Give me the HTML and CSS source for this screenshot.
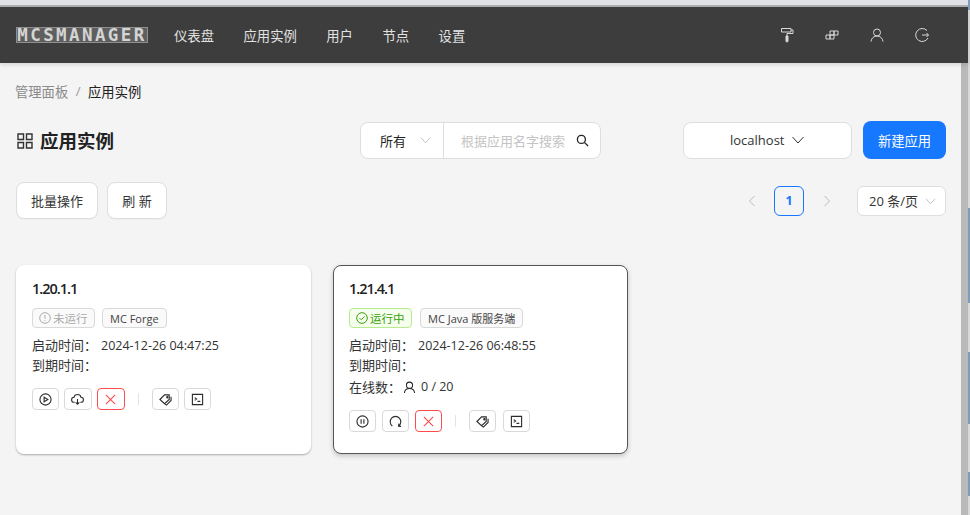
FILE: index.html
```html
<!DOCTYPE html>
<html lang="zh-CN">
<head>
    <meta charset="UTF-8">
    <title>应用实例 - MCSManager</title>
    <link rel="stylesheet" href="styles.css">
</head>
<body>
    <div class="window">
        <div class="browser-edge"></div>
        <div class="header">
            <div class="logo">MCSMANAGER</div>
            <div class="nav-item">仪表盘</div>
            <div class="nav-item">应用实例</div>
            <div class="nav-item">用户</div>
            <div class="nav-item">节点</div>
            <div class="nav-item">设置</div>
            <div class="header-tools">
                <svg class="tool" viewBox="0 0 16 16"><path d="M2.500 1.500h9.500v3.500H2.500zM12 3h2v3.500H8V9"/><path class="solid" d="M7 9h2v5a1 1 0 0 1-2 0z"/></svg>
                <svg class="tool" viewBox="0 0 16 16"><path d="M2 8h4v4H2zM6 8h4v4H6zM6 4h4v4H6zM10 4h4v4h-4z"/></svg>
                <svg class="tool" viewBox="0 0 16 16"><circle cx="8" cy="5.500" r="3.500"/><path d="M2 14.500c.4-3.500 3-5.500 6-5.500s5.600 2 6 5.500"/></svg>
                <svg class="tool" viewBox="0 0 16 16"><path d="M13 3.600A6.500 6.500 0 1 0 14 11M8 8h6.500M12.500 6l2 2-2 2"/></svg>
            </div>
        </div>

        <div class="below">
            <div class="content">
                <div class="breadcrumb">
                    <span class="crumb-link">管理面板</span>
                    <span class="crumb-sep">/</span>
                    <span>应用实例</span>
                </div>

                <div class="title-row">
                    <svg class="title-icon" viewBox="0 0 16 16"><path d="M1 1h5.500v5.500H1zM9.500 1H15v5.500H9.500zM1 9.500h5.500V15H1zM9.500 9.500H15V15H9.500z"/></svg>
                    <h1 class="title">应用实例</h1>
                    <div class="search-group">
                        <div class="search-type">所有
                            <svg class="chevron light" viewBox="0 0 12 8"><path d="M1 1.500l5 5.500 5-5.500"/></svg>
                        </div>
                        <div class="search-input">根据应用名字搜索
                            <svg class="search-icon" viewBox="0 0 14 14"><circle cx="5.800" cy="5.800" r="4.300"/><path d="M9 9l4 4"/></svg>
                        </div>
                    </div>
                    <div class="node-select">localhost
                        <svg class="chevron dark" viewBox="0 0 12 8"><path d="M.5 1l5.500 6 5.500-6"/></svg>
                    </div>
                    <div class="btn-primary">新建应用</div>
                </div>

                <div class="tool-row">
                    <div class="btn">批量操作</div>
                    <div class="btn btn-refresh">刷 新</div>
                    <div class="pager">
                        <svg class="pager-arrow" viewBox="0 0 8 12"><path d="M6.500 1L1.500 6l5 5"/></svg>
                        <div class="page-current">1</div>
                        <svg class="pager-arrow" viewBox="0 0 8 12"><path d="M1.500 1l5 5-5 5"/></svg>
                        <div class="page-size">20 条/页
                            <svg class="chevron light" viewBox="0 0 12 8"><path d="M1 1.500l5 5.500 5-5.500"/></svg>
                        </div>
                    </div>
                </div>

                <div class="cards">
                    <div class="card">
                        <div class="card-title">1.20.1.1</div>
                        <div class="tags">
                            <span class="tag tag-off">
                                <svg class="tag-icon" viewBox="0 0 12 12"><circle cx="6" cy="6" r="5.300"/><path d="M6 3v3.800M6 8.200v1"/></svg>未运行
                            </span>
                            <span class="tag">MC Forge</span>
                        </div>
                        <div class="info"><span class="info-label">启动时间：</span>2024-12-26 04:47:25</div>
                        <div class="info"><span class="info-label">到期时间：</span></div>
                        <div class="actions">
                            <div class="act">
                                <svg viewBox="0 0 14 14"><circle cx="7" cy="7" r="6"/><path d="M5.500 4.500L9.500 7l-4 2.500z"/></svg>
                            </div>
                            <div class="act act-wide">
                                <svg viewBox="0 0 14 14"><path d="M4 10H3.500a2.700 2.700 0 0 1-.3-5.400 3.900 3.900 0 0 1 7.600 0A2.700 2.700 0 0 1 10.500 10H10M7 6.500V12M5 10l2 2 2-2"/></svg>
                            </div>
                            <div class="act act-wide act-danger">
                                <svg viewBox="0 0 14 14"><path d="M2 2l10 10M12 2L2 12"/></svg>
                            </div>
                            <div class="act-sep"></div>
                            <div class="act">
                                <svg viewBox="0 0 14 14"><path d="M1 7l5-5h5v5l-5 4.500zM13 4v4l-5 5-1.500-1"/><circle cx="9" cy="4.500" r=".7"/></svg>
                            </div>
                            <div class="act">
                                <svg viewBox="0 0 14 14"><path d="M1.500 1.500h11v11h-11zM4 5l2 1.500L4 8M7 9h3"/></svg>
                            </div>
                        </div>
                    </div>

                    <div class="card card-active">
                        <div class="card-title">1.21.4.1</div>
                        <div class="tags">
                            <span class="tag tag-on">
                                <svg class="tag-icon" viewBox="0 0 12 12"><circle cx="6" cy="6" r="5.300"/><path d="M3.500 6l1.800 1.800 3.200-3.300"/></svg>运行中
                            </span>
                            <span class="tag">MC Java 版服务端</span>
                        </div>
                        <div class="info"><span class="info-label">启动时间：</span>2024-12-26 06:48:55</div>
                        <div class="info"><span class="info-label">到期时间：</span></div>
                        <div class="info info-online"><span class="info-label-short">在线数：</span><svg class="online-icon" viewBox="0 0 14 14"><circle cx="7" cy="4.500" r="3.300"/><path d="M1.500 13c.3-3 2.500-5 5.500-5s5.200 2 5.500 5"/></svg><span>0 / 20</span></div>
                        <div class="actions">
                            <div class="act">
                                <svg viewBox="0 0 14 14"><circle cx="7" cy="7" r="6"/><path d="M5.500 4.500v5M8.500 4.500v5"/></svg>
                            </div>
                            <div class="act">
                                <svg viewBox="0 0 14 14"><path d="M3.600 11.800A5.700 5.700 0 1 1 10.400 11.800M10.700 9.300l-.4 2.700 2.700.2"/></svg>
                            </div>
                            <div class="act act-danger">
                                <svg viewBox="0 0 14 14"><path d="M2 2l10 10M12 2L2 12"/></svg>
                            </div>
                            <div class="act-sep"></div>
                            <div class="act act-wide">
                                <svg viewBox="0 0 14 14"><path d="M1 7l5-5h5v5l-5 4.500zM13 4v4l-5 5-1.500-1"/><circle cx="9" cy="4.500" r=".7"/></svg>
                            </div>
                            <div class="act act-wide">
                                <svg viewBox="0 0 14 14"><path d="M1.500 1.500h11v11h-11zM4 5l2 1.500L4 8M7 9h3"/></svg>
                            </div>
                        </div>
                    </div>
                </div>
            </div>
            <div class="scroll-gutter"></div>
        </div>
    </div>
</body>
</html>
```

FILE: styles.css
```css
* {
    box-sizing: border-box;
}

html, body {
    margin: 0;
    height: 100%;
    overflow: hidden;
}

body {
    font-family: "Open Sans", "Noto Sans CJK SC", sans-serif;
    font-size: 13px;
    color: #333;
    /* bits of the desktop behind the window, seen at the right edge */
    background: linear-gradient(to bottom,
        #7f9cbb 0 10px, #d9d9d9 10px 208px, #7f9cbb 208px 303px,
        #d9d9d9 303px 352px, #7f9cbb 352px 424px, #d9d9d9 424px 472px,
        #7f9cbb 472px 496px, #d9d9d9 496px);
}

svg {
    display: block;
    fill: none;
    stroke: currentColor;
}

.window {
    display: flex;
    flex-direction: column;
    width: 968px;
    height: 515px;
}

.browser-edge {
    height: 7px;
    background-color: #dfe0e5;
    border-bottom: 2px solid #aeaeb0;
}

/* Top bar */
.header {
    display: flex;
    align-items: center;
    height: 56px;
    padding-left: 16px;
    background-color: #3d3d3d;
    box-shadow: 0 2px 4px rgba(0, 0, 0, 0.12);
    position: relative;
    z-index: 1;
}

.logo {
    display: flex;
    align-items: center;
    justify-content: center;
    width: 132px;
    height: 16px;
    margin: 0 26px 1px 0;
    border: 1px solid #8f8f8f;
    background-color: #5f5f5f;
    color: #d4d4d4;
    font-family: "DejaVu Sans Mono", monospace;
    font-size: 17.500px;
    font-weight: bold;
    letter-spacing: 2.400px;
    white-space: nowrap;
}

.nav-item {
    margin-right: 29.500px;
    color: #e2e2e2;
    font-size: 13.330px;
}

.header-tools {
    display: flex;
    gap: 29px;
    margin-left: auto;
    margin-right: 38px;
}

.tool {
    width: 16px;
    height: 16px;
    color: #d8d8d8;
    stroke-width: 1;
}

.tool .solid {
    fill: currentColor;
}

/* Page body */
.below {
    display: flex;
    flex: 1;
    min-height: 0;
}

.content {
    flex: 1;
    padding: 19px 15px 0 16px;
    background-color: #f4f4f4;
}

.scroll-gutter {
    width: 7px;
    background-color: #b9b9b9;
}

.breadcrumb {
    display: flex;
    align-items: center;
    height: 18px;
    margin-left: -1px;
    color: #222;
    font-size: 13.300px;
}

.crumb-link {
    color: #8a8a8a;
}

.crumb-sep {
    margin: 0 7.500px;
    color: #999;
}

.title-row {
    display: flex;
    align-items: center;
    height: 38px;
    margin-top: 21px;
}

.title-icon {
    width: 16px;
    height: 16px;
    margin: 2px 7px 0 1px;
    color: #333;
    stroke-width: 1.400;
}

.title {
    width: 320px;
    margin: 0;
    color: #222;
    font-size: 18.500px;
    font-weight: bold;
}

.search-group {
    display: flex;
    flex: none;
    width: 241px;
    height: 37px;
    border: 1px solid #dedede;
    border-radius: 8px;
    background-color: #fff;
}

.search-type {
    display: flex;
    flex: none;
    align-items: center;
    justify-content: space-between;
    width: 83px;
    padding: 0 12px 0 19px;
    border-right: 1px solid #dedede;
    color: #222;
}

.search-input {
    display: flex;
    align-items: center;
    flex: 1;
    padding-left: 17px;
    color: #c4c4c4;
    white-space: nowrap;
}

.search-icon {
    flex: none;
    width: 13px;
    height: 13px;
    margin-left: 11px;
    color: #222;
    stroke-width: 1.400;
}

.chevron {
    flex: none;
    width: 11px;
    height: 8px;
}

.chevron.light {
    color: #bdbdbd;
}

.chevron.dark {
    width: 12px;
    height: 8px;
    margin-left: 8px;
    color: #333;
}

.node-select {
    display: flex;
    align-items: center;
    justify-content: center;
    width: 168.500px;
    height: 37px;
    margin-left: 82px;
    border: 1px solid #dedede;
    border-radius: 8px;
    background-color: #fff;
    font-size: 13px;
}

.btn-primary {
    display: flex;
    align-items: center;
    justify-content: center;
    width: 83px;
    height: 38px;
    margin-left: 11.500px;
    border-radius: 8px;
    background-color: #1677ff;
    color: #fff;
    font-size: 13.300px;
}

.tool-row {
    display: flex;
    align-items: center;
    height: 37px;
    margin-top: 23px;
}

.btn {
    display: flex;
    align-items: center;
    justify-content: center;
    width: 82px;
    height: 37px;
    margin-right: 9px;
    border: 1px solid #dedede;
    border-radius: 8px;
    background-color: #fff;
    box-shadow: 0 1px 1px rgba(0, 0, 0, 0.03);
    color: #333;
}

.btn-refresh {
    width: 60px;
}

.pager {
    display: flex;
    align-items: center;
    margin-left: auto;
}

.pager-arrow {
    width: 8px;
    height: 12px;
    color: #bbb;
}

.page-current {
    width: 30px;
    height: 30px;
    margin: 0 19px 0 18px;
    border: 1px solid #1677ff;
    border-radius: 6px;
    color: #1677ff;
    font-weight: bold;
    font-size: 12.500px;
    line-height: 28px;
    text-align: center;
}

.page-size {
    display: flex;
    align-items: center;
    justify-content: space-between;
    width: 89px;
    height: 30px;
    margin-left: 26px;
    padding: 0 9px 0 11px;
    border: 1px solid #dedede;
    border-radius: 6px;
    background-color: #fff;
    white-space: nowrap;
}

/* Instance cards */
.cards {
    display: grid;
    grid-template-columns: 294.500px 294.500px;
    gap: 22.500px;
    margin-top: 46px;
}

.card {
    height: 189px;
    padding: 12px 15px 0 16px;
    border-radius: 8px;
    background-color: #fff;
    box-shadow: 0 1px 2px rgba(0, 0, 0, 0.3);
}

.card-active {
    padding-left: 15px;
    border: 1px solid #555;
    padding-top: 11px;
    box-shadow: 0 2px 5px rgba(0, 0, 0, 0.2);
}

.card-title {
    height: 24px;
    color: #222;
    font-size: 14.500px;
    font-weight: 600;
    letter-spacing: -1px;
    line-height: 24px;
}

.tags {
    display: flex;
    gap: 7px;
    margin-top: 7px;
    margin-bottom: 7px;
}

.tag {
    display: flex;
    align-items: center;
    height: 20px;
    padding: 0 7px;
    border: 1px solid #d9d9d9;
    border-radius: 4px;
    background-color: #fafafa;
    color: #444;
    font-size: 11px;
    white-space: nowrap;
}

.tag-off {
    width: 63px;
    padding: 0 6px;
    color: #aaa;
    font-size: 11.500px;
}

.tag-on {
    width: 63px;
    padding: 0 6px;
    margin-right: 1px;
    border-color: #b7eb8f;
    background-color: #f6ffed;
    color: #389e0d;
    font-size: 11.500px;
}

.tag-icon {
    flex: none;
    width: 12px;
    height: 12px;
    margin-right: 2px;
}

.info {
    display: flex;
    align-items: baseline;
    height: 20px;
    color: #333;
    font-size: 12.500px;
    line-height: 20px;
    white-space: pre;
}

.info-label {
    width: 69px;
    font-size: 13px;
}

.info-online {
    align-items: center;
    height: 22px;
    margin-top: 1px;
}

.info-label-short {
    width: 54px;
    font-size: 13px;
}

.online-icon {
    width: 13px;
    height: 13px;
    margin-right: 5px;
    color: #222;
    stroke-width: 1.100;
}

.actions {
    display: flex;
    align-items: center;
    gap: 5.500px;
    margin-top: 13px;
}

.card-active .actions {
    gap: 6.600px;
    margin-top: 12px;
}

.act {
    display: flex;
    align-items: center;
    justify-content: center;
    width: 26.500px;
    height: 22px;
    border: 1px solid #d9d9d9;
    border-radius: 4px;
    color: #2c2c2c;
}

.act-wide {
    width: 27.500px;
}

.act svg {
    width: 13px;
    height: 13px;
    stroke-width: 1.200;
}

.act-danger {
    border-color: #ff4d4f;
    color: #ff4d4f;
}

.act-sep {
    width: 1px;
    height: 12px;
    margin: 0 8px 0 7.500px;
    background-color: #e4e4e4;
}

.card-active .act-sep {
    margin: 0 6px 0 7px;
}
```
